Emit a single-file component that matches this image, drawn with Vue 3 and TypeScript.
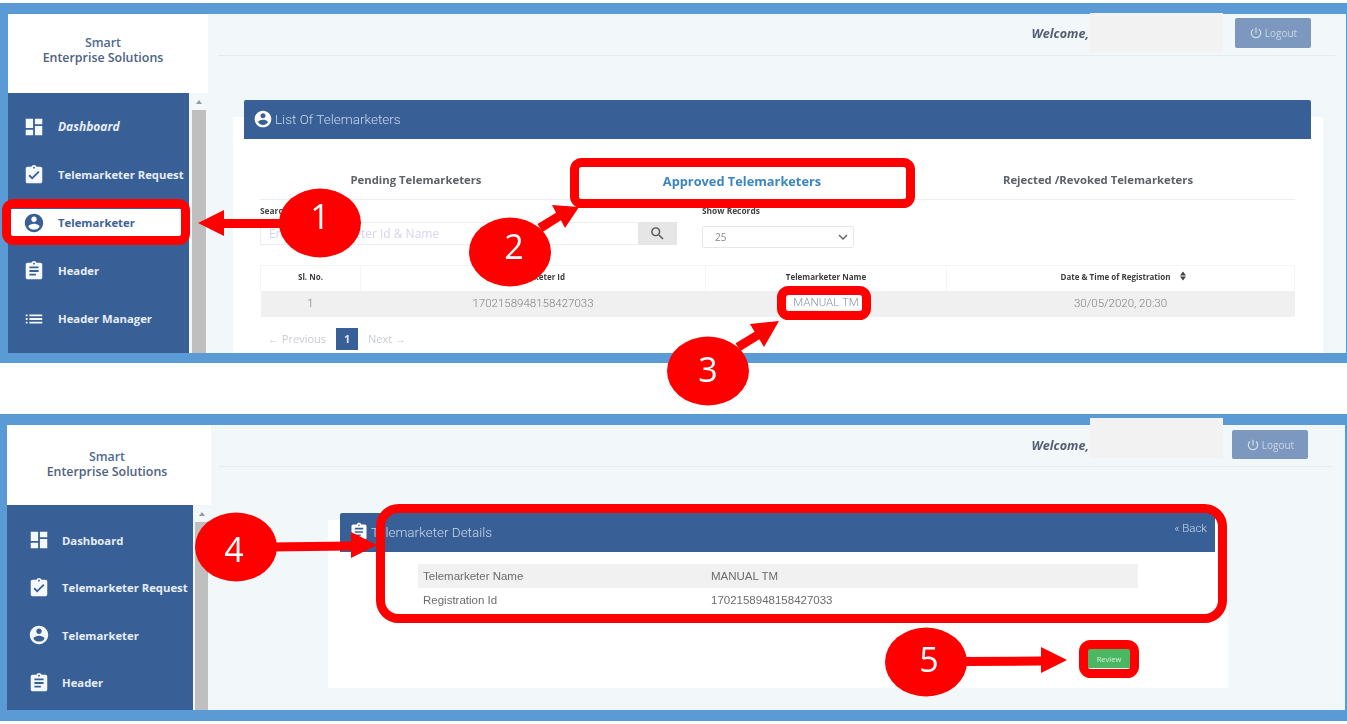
<template>
  <div class="page">
    <!-- icon sprite -->
    <svg class="sprite" aria-hidden="true">
      <symbol v-for="(d, name) in icons" :id="'i-' + name" :key="name" viewBox="0 0 24 24">
        <path :d="d" />
      </symbol>
    </svg>

    <!-- list screen -->
    <section class="shot shot-list">
      <div class="shot-body">
        <aside class="side">
          <div class="logo">
            <span class="logo-top">Smart</span>
            <span>Enterprise Solutions</span>
          </div>
          <div class="side-low">
            <nav class="menu">
              <a
                v-for="item in listMenu"
                :key="item.label"
                class="menu-item"
                :class="{ active: item.label === 'Telemarketer', slanted: item.label === 'Dashboard' }"
              >
                <svg class="menu-icon"><use :href="'#i-' + item.icon" /></svg>
                {{ item.label }}
              </a>
            </nav>
            <div class="scroll"><i class="scroll-up"></i><b class="scroll-thumb"></b></div>
          </div>
        </aside>

        <main class="main">
          <header class="topbar">
            <em class="welcome">Welcome,</em>
            <span class="hidden-name"></span>
            <button class="logout"><svg><use href="#i-power" /></svg>Logout</button>
          </header>

          <div class="card">
            <div class="card-head">
              <span class="card-title"><svg><use href="#i-user" /></svg>List Of Telemarketers</span>
            </div>
            <div class="tabs">
              <span>Pending Telemarketers</span>
              <span class="tab-on">Approved Telemarketers</span>
              <span class="tab-last">Rejected /Revoked Telemarketers</span>
            </div>
            <div class="filters">
              <div class="f-search">
                <label>Search</label>
                <div class="search-box">
                  <span class="placeholder">Enter Telemarketer Id &amp; Name</span>
                  <span class="search-btn"><svg><use href="#i-search" /></svg></span>
                </div>
              </div>
              <div class="f-records">
                <label>Show Records</label>
                <div class="select">25<svg><use href="#i-chevron" /></svg></div>
              </div>
            </div>
            <table class="grid">
              <thead>
                <tr>
                  <th class="c1">Sl. No.</th>
                  <th class="c2">Telemarketer Id</th>
                  <th class="c3">Telemarketer Name</th>
                  <th class="c4">Date &amp; Time of Registration<svg class="sort"><use href="#i-sort" /></svg></th>
                </tr>
              </thead>
              <tbody>
                <tr>
                  <td>1</td>
                  <td>1702158948158427033</td>
                  <td><span class="tm-link">MANUAL TM</span></td>
                  <td>30/05/2020, 20:30</td>
                </tr>
              </tbody>
            </table>
            <div class="pager">
              <span>← Previous</span>
              <b class="page-no">1</b>
              <span>Next →</span>
            </div>
          </div>
        </main>
      </div>
    </section>

    <!-- details screen -->
    <section class="shot shot-detail">
      <div class="shot-body">
        <aside class="side">
          <div class="logo">
            <span class="logo-top">Smart</span>
            <span>Enterprise Solutions</span>
          </div>
          <div class="side-low">
            <nav class="menu">
              <a v-for="item in detailMenu" :key="item.label" class="menu-item">
                <svg class="menu-icon"><use :href="'#i-' + item.icon" /></svg>
                {{ item.label }}
              </a>
            </nav>
            <div class="scroll"><i class="scroll-up"></i><b class="scroll-thumb"></b></div>
          </div>
        </aside>

        <main class="main">
          <header class="topbar">
            <em class="welcome">Welcome,</em>
            <span class="hidden-name"></span>
            <button class="logout"><svg><use href="#i-power" /></svg>Logout</button>
          </header>

          <div class="card">
            <div class="card-head">
              <span class="card-title"><svg><use href="#i-note" /></svg>Telemarketer Details</span>
              <span class="back">« Back</span>
            </div>
            <table class="info">
              <tbody>
                <tr v-for="row in details" :key="row[0]">
                  <td>{{ row[0] }}</td>
                  <td>{{ row[1] }}</td>
                </tr>
              </tbody>
            </table>
            <button class="review">Review</button>
          </div>
        </main>
      </div>
    </section>

    <!-- red callouts drawn over the screenshots -->
    <svg class="marks" viewBox="0 0 1347 724">
      <rect
        v-for="(b, i) in boxes"
        :key="'b' + i"
        :x="b[0] + 4.5"
        :y="b[1] + 4.5"
        :width="b[2] - 9"
        :height="b[3] - 9"
        :rx="b[4]"
        fill="none"
        stroke="#ff0000"
        stroke-width="9"
      />
      <polygon v-for="(p, i) in arrows" :key="'a' + i" :points="p" fill="#ff0000" />
      <g v-for="m in bubbles" :key="m.n">
        <ellipse :cx="m.x" :cy="m.y" rx="41" ry="34.5" fill="#ff0000" />
        <text :x="m.tx" :y="m.ty" class="bubble-no" text-anchor="middle">{{ m.n }}</text>
      </g>
    </svg>
  </div>
</template>

<script setup lang="ts">
interface MenuItem {
  label: string
  icon: string
}

const icons: Record<string, string> = {
  dash: 'M3 13h8V3H3v10zm0 8h8v-6H3v6zm10 0h8V11h-8v10zm0-18v6h8V3h-8z',
  check: 'M19 3h-4.18C14.4 1.84 13.3 1 12 1c-1.3 0-2.4.84-2.82 2H5c-1.1 0-2 .9-2 2v14c0 1.1.9 2 2 2h14c1.1 0 2-.9 2-2V5c0-1.1-.9-2-2-2zm-7 0c.55 0 1 .45 1 1s-.45 1-1 1-1-.45-1-1 .45-1 1-1zm-2 14l-4-4 1.41-1.41L10 14.17l6.59-6.59L18 9l-8 8z',
  user: 'M12 2C6.48 2 2 6.48 2 12s4.48 10 10 10 10-4.48 10-10S17.52 2 12 2zm0 3c1.66 0 3 1.34 3 3s-1.34 3-3 3-3-1.34-3-3 1.34-3 3-3zm0 14.2c-2.5 0-4.71-1.28-6-3.22.03-1.99 4-3.08 6-3.08 1.99 0 5.97 1.09 6 3.08-1.29 1.94-3.5 3.22-6 3.22z',
  note: 'M19 3h-4.18C14.4 1.84 13.3 1 12 1c-1.3 0-2.4.84-2.82 2H5c-1.1 0-2 .9-2 2v14c0 1.1.9 2 2 2h14c1.1 0 2-.9 2-2V5c0-1.1-.9-2-2-2zm-7 0c.55 0 1 .45 1 1s-.45 1-1 1-1-.45-1-1 .45-1 1-1zm2 14H7v-2h7v2zm3-4H7v-2h10v2zm0-4H7V7h10v2z',
  list: 'M3 13h2v-2H3v2zm0 4h2v-2H3v2zm0-8h2V7H3v2zm4 4h14v-2H7v2zm0 4h14v-2H7v2zM7 7v2h14V7H7z',
  search: 'M15.5 14h-.79l-.28-.27A6.47 6.47 0 0 0 16 9.5 6.5 6.5 0 1 0 9.5 16c1.61 0 3.09-.59 4.23-1.57l.27.28v.79l5 4.99L20.49 19l-4.99-5zm-6 0C7.01 14 5 11.99 5 9.5S7.01 5 9.5 5 14 7.01 14 9.5 11.99 14 9.5 14z',
  chevron: 'M7.41 8.59 12 13.17l4.59-4.58L18 10l-6 6-6-6z',
  power: 'M13 3h-2v10h2V3zm4.83 2.17-1.42 1.42A6.92 6.92 0 0 1 19 12a7 7 0 1 1-11.42-5.42L6.17 5.17A8.93 8.93 0 0 0 3 12a9 9 0 0 0 18 0c0-2.74-1.23-5.18-3.17-6.83z',
  sort: 'M12 3l6 8H6zM12 21l-6-8h12z'
}

const listMenu: MenuItem[] = [
  { label: 'Dashboard', icon: 'dash' },
  { label: 'Telemarketer Request', icon: 'check' },
  { label: 'Telemarketer', icon: 'user' },
  { label: 'Header', icon: 'note' },
  { label: 'Header Manager', icon: 'list' }
]
const detailMenu = listMenu.slice(0, 4)

const details = [
  ['Telemarketer Name', 'MANUAL TM'],
  ['Registration Id', '1702158948158427033']
]

// x, y, width, height, radius of the outer edge
const boxes = [
  [2, 199, 188, 46, 7],
  [570, 158, 345, 50, 7],
  [777, 286, 94, 34, 7],
  [376, 504, 851, 119, 18],
  [1079, 640, 60, 38, 7]
]

const arrows = [
  '198,223 224,210 224,219 285,219 285,228 224,228 224,236',
  '579,207 552,205 556,212.7 537.5,224 542.5,232 561,220.3 565,228',
  '779,321 750,324 754.6,331.7 735.6,343.3 740.4,351 759.4,339.3 764,347',
  '377,545 351,532 351,541.5 270,542.5 270,551.5 351,550.5 351,558',
  '1067,660 1041,647 1041,656.5 960,657 960,666 1041,665.5 1041,673'
]

// the numbers don't sit centred in their bubbles in the reference
const bubbles = [
  { n: 1, x: 320, y: 223, tx: 320, ty: 229 },
  { n: 2, x: 510, y: 252, tx: 514, ty: 259 },
  { n: 3, x: 708, y: 371, tx: 708, ty: 382 },
  { n: 4, x: 236, y: 547, tx: 234, ty: 562 },
  { n: 5, x: 926, y: 662, tx: 929, ty: 672 }
]
</script>

<style scoped>
* {
  box-sizing: border-box;
}

.page {
  position: relative;
  width: 1347px;
  height: 724px;
  padding-top: 3px;
  overflow: hidden;
  background: #fff;
  font-family: "Open Sans", "Liberation Sans", sans-serif;
}

.sprite {
  position: absolute;
  width: 0;
  height: 0;
}

.marks {
  position: absolute;
  left: 0;
  top: 0;
  width: 1347px;
  height: 724px;
}

.bubble-no {
  fill: #fff;
  font-family: "Open Sans", sans-serif;
  font-size: 34px;
}

/* frames */
.shot {
  background: #5b9bd5;
}

.shot-list {
  height: 360px;
  padding: 11px 1px 10px 8px;
  margin-bottom: 51px;
}

.shot-detail {
  height: 307px;
  padding: 11px 2px 11px 7px;
}

.shot-body {
  display: flex;
  height: 100%;
  background: #f2f7fa;
  filter: blur(0.6px);
}

/* sidebar */
.side {
  display: flex;
  flex-direction: column;
  flex: none;
  width: 200px;
}

.shot-detail .side {
  width: 204px;
}

.logo {
  display: flex;
  flex-direction: column;
  align-items: center;
  flex: none;
  height: 79px;
  padding: 21px 10px 0 0;
  background: #fff;
  color: #4d6283;
  font-size: 12.4px;
  font-weight: 600;
  line-height: 15px;
}

.shot-detail .logo {
  height: 80px;
  padding: 24px 4px 0 0;
}

.logo-top {
  color: #506a94;
}

.side-low {
  display: flex;
  flex: 1;
  min-height: 0;
}

.menu {
  flex: none;
  width: 181px;
  padding-top: 20px;
  background: #386097;
  overflow: hidden;
}

.shot-detail .menu {
  width: 186px;
  padding-top: 21.5px;
}

.menu-item {
  display: flex;
  align-items: center;
  gap: 13px;
  height: 28px;
  margin: 0 8px 20px 3px;
  padding: 0 0 1px 12px;
  color: #e6edf6;
  font-size: 11.3px;
  font-weight: 700;
  white-space: nowrap;
}

.shot-detail .menu-item {
  gap: 12px;
  margin: 0 0 19.5px;
  padding-left: 21px;
}

.menu-item.slanted {
  font-size: 12px;
  font-style: italic;
}

.menu-item.active {
  background: #fff;
  color: #3e6295;
}

.menu-icon {
  flex: none;
  width: 22px;
  height: 22px;
  fill: #f4f7fb;
}

.active .menu-icon {
  fill: #386097;
}

.scroll {
  display: flex;
  flex-direction: column;
  width: 14px;
  margin-left: 3px;
}

.shot-detail .scroll {
  width: 13px;
  margin-left: 2px;
}

.scroll-up {
  flex: none;
  width: 0;
  height: 0;
  margin: 7px auto 6px;
  border: 3px solid transparent;
  border-top: 0;
  border-bottom: 4px solid #9a9a9a;
}

.scroll-thumb {
  flex: 1;
  background: #bfbfbf;
}

/* main column */
.main {
  display: flex;
  flex-direction: column;
  flex: 1;
  min-width: 0;
}

.topbar {
  display: flex;
  justify-content: flex-end;
  align-items: center;
  flex: none;
  height: 42px;
  margin: 0 11px 0 10px;
  padding: 0 24px 4px 0;
  border-bottom: 1px solid #e6ebee;
}

.shot-detail .topbar {
  margin: 0 12px 0 7px;
  padding: 0 25px 2px 0;
}

.welcome {
  margin-top: 1px;
  color: #565f72;
  font-size: 12.6px;
  font-weight: 700;
}

.shot-detail .welcome {
  margin-top: 2px;
}

.hidden-name {
  align-self: flex-start;
  width: 133px;
  height: 39px;
  margin: -1px 12px 0 1px;
  background: #f2f2f2;
}

.shot-detail .hidden-name {
  height: 40px;
  margin: -7px 9px 0 1px;
}

.logout {
  display: flex;
  align-items: center;
  justify-content: center;
  gap: 2px;
  width: 76px;
  height: 30px;
  padding: 0;
  border: 0;
  border-radius: 2px;
  background: #7c98bf;
  color: #c9d6e6;
  font-family: inherit;
  font-size: 10px;
}

.shot-detail .logout {
  height: 29px;
}

.logout svg {
  width: 14px;
  height: 14px;
  fill: #d4deeb;
}

/* card */
.card {
  flex: 1;
  margin: 61px 23px 0 25px;
  padding: 0 28px 0 27px;
  background: #fff;
}

.shot-detail .card {
  flex: none;
  height: 168px;
  margin: 53px 117px 0;
  padding: 0;
}

.card-head {
  display: flex;
  justify-content: space-between;
  height: 39px;
  margin: -17px -16px 0 -16px;
  padding: 0 0 2px 9px;
  border-radius: 2px 2px 0 0;
  background: #386097;
  color: #c9d6e8;
  font-family: "Roboto", sans-serif;
  font-size: 13.5px;
  font-weight: 300;
}

.shot-detail .card-head {
  margin: -7px 13px 0 12px;
  padding: 0 8px 2px 9px;
}

.card-title {
  display: flex;
  align-items: center;
  gap: 2px;
}

.card-title svg {
  width: 20px;
  height: 20px;
  fill: #fff;
}

.back {
  padding-top: 8px;
  font-size: 11.5px;
}

/* tabs */
.tabs {
  display: grid;
  grid-template-columns: 312px 340px 1fr;
  align-items: center;
  height: 40px;
  margin-top: 21px;
  border-bottom: 1px solid #eceff1;
  color: #5d6269;
  font-size: 11.3px;
  font-weight: 700;
  text-align: center;
}

.tab-on {
  padding-top: 2px;
  color: #3a86c2;
  font-size: 12.8px;
}

.tab-last {
  padding-right: 11px;
}

/* filters */
.filters {
  display: flex;
  gap: 25px;
  padding-top: 6px;
}

.filters label {
  display: block;
  height: 10px;
  color: #444;
  font-size: 8.4px;
  font-weight: 700;
  line-height: 10px;
}

.f-search {
  width: 417px;
}

.search-box {
  display: flex;
  justify-content: space-between;
  height: 23px;
  margin-top: 6px;
  border: 1px solid #eceef0;
}

.placeholder {
  padding-left: 8px;
  color: #d5d4f0;
  font-size: 12px;
  line-height: 21px;
}

.search-btn {
  display: flex;
  align-items: center;
  justify-content: center;
  width: 39px;
  margin: -1px -1px -1px 0;
  background: #e6e6e6;
}

.search-btn svg {
  width: 17px;
  height: 17px;
  fill: #555;
}

.f-records {
  width: 152px;
}

.select {
  display: flex;
  align-items: center;
  justify-content: space-between;
  height: 22px;
  margin-top: 10px;
  padding: 0 1px 0 12px;
  border: 1px solid #e6e8ea;
  border-radius: 2px;
  color: #888;
  font-size: 10px;
}

.select svg {
  width: 18px;
  height: 18px;
  fill: #666;
}

/* list table */
.grid {
  width: 1035px;
  margin-top: 17px;
  border-collapse: collapse;
  table-layout: fixed;
}

.grid th {
  position: relative;
  height: 25px;
  padding: 0 0 4px;
  border: 1px solid #f3f4f5;
  border-bottom: 0;
  color: #3d3d3d;
  font-size: 8px;
  font-weight: 700;
}

.c1 {
  width: 100px;
}

.c2 {
  width: 345px;
}

.c3 {
  width: 241px;
}

.grid th.c4 {
  padding-right: 10px;
}

.sort {
  position: absolute;
  top: 4px;
  right: 105px;
  width: 12px;
  height: 12px;
  fill: #444;
}

.grid td {
  height: 26px;
  padding: 0 0 2px;
  background: #f0f0f0;
  color: #808080;
  font-family: "Roboto", sans-serif;
  font-size: 11.5px;
  font-weight: 300;
  text-align: center;
}

.tm-link {
  display: inline-block;
  width: 76px;
  background: #fff;
  color: #8a93a8;
  font-size: 11.5px;
  line-height: 15px;
}

.pager {
  display: flex;
  align-items: center;
  gap: 10px;
  height: 22px;
  margin-top: 11px;
  padding-left: 8px;
  color: #c9cbcf;
  font-size: 11px;
}

.page-no {
  width: 22px;
  background: #386097;
  color: #dce5f1;
  line-height: 22px;
  text-align: center;
}

/* details */
.info {
  width: 720px;
  margin: 12px 0 0 90px;
  border-collapse: collapse;
  table-layout: fixed;
  color: #6c6c6c;
  font-family: "Liberation Sans", sans-serif;
  font-size: 11.5px;
}

.info td {
  height: 24px;
  padding: 0;
}

.info td:first-child {
  width: 293px;
  padding-left: 5px;
}

.info tr:first-child {
  background: #f1f1f1;
}

.review {
  display: block;
  width: 42px;
  height: 19px;
  margin: 37px 0 0 760px;
  padding: 0;
  border: 0;
  border-radius: 1px;
  background: #4cb763;
  color: #d8f0dd;
  font-family: inherit;
  font-size: 7.5px;
}
</style>
